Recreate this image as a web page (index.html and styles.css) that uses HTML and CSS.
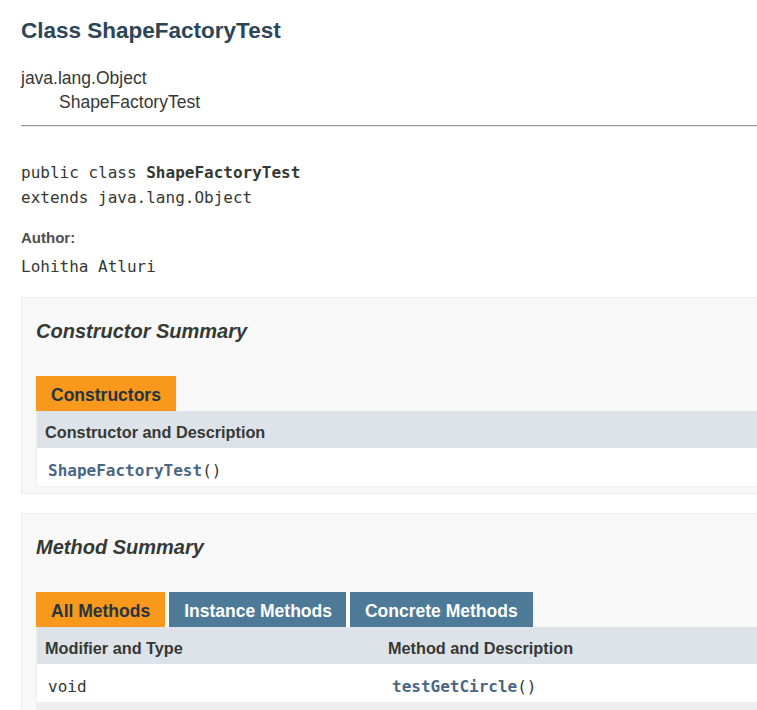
FILE: index.html
```html
<!DOCTYPE html>
<html lang="en">
<head>
<meta charset="utf-8">
<title>ShapeFactoryTest</title>
<link rel="stylesheet" href="styles.css">
</head>
<body>
<div class="page">
  <h2 class="title">Class ShapeFactoryTest</h2>
  <div class="inheritance">
    <div class="inh-line">java.lang.Object</div>
    <div class="inh-line inh-sub">ShapeFactoryTest</div>
  </div>
  <div class="rule"></div>
  <pre class="decl">public class <b>ShapeFactoryTest</b>
extends java.lang.Object</pre>
  <div class="tag-label">Author:</div>
  <div class="tag-value">Lohitha Atluri</div>

  <section class="block">
    <h3 class="block-title">Constructor Summary</h3>
    <div class="tabs">
      <span class="tab active">Constructors</span>
    </div>
    <div class="table one-col">
      <div class="th">Constructor and Description</div>
      <div class="td code"><a class="member" href="#">ShapeFactoryTest</a>()</div>
    </div>
  </section>

  <section class="block">
    <h3 class="block-title">Method Summary</h3>
    <div class="tabs">
      <span class="tab active">All Methods</span>
      <span class="tab">Instance Methods</span>
      <span class="tab">Concrete Methods</span>
    </div>
    <div class="table two-col">
      <div class="th">Modifier and Type</div>
      <div class="th">Method and Description</div>
      <div class="td code first">void</div>
      <div class="td code last"><a class="member" href="#">testGetCircle</a>()</div>
      <div class="td code first alt"></div>
      <div class="td code last alt"></div>
    </div>
  </section>
</div>
</body>
</html>
```

FILE: styles.css
```css
html, body {
  margin: 0;
  padding: 0;
  overflow: hidden;
  background: #fff;
}

body {
  font-family: "Liberation Sans", Arial, sans-serif;
  color: #353833;
}

.page {
  padding-left: 21px;
  width: 1100px;
}

.title {
  margin: 18px 0 0;
  font-size: 22.5px;
  line-height: 26px;
  font-weight: bold;
  color: #2c4557;
}

.inheritance {
  margin-top: 23px;
  font-size: 17.5px;
  line-height: 23.5px;
}

.inh-sub {
  padding-left: 38px;
}

.rule {
  margin-top: 11px;
  border-top: 1px solid #999;
  border-bottom: 1px solid #e4e4e4;
}

.decl {
  margin: 33px 0 0;
  font-family: "DejaVu Sans Mono", monospace;
  font-size: 16px;
  line-height: 25px;
  color: #353833;
}

.decl b {
  font-weight: bold;
}

.tag-label {
  margin-top: 19px;
  font-size: 15px;
  line-height: 18px;
  font-weight: bold;
  color: #4e4e4e;
}

.tag-value {
  margin-top: 9px;
  font-family: "DejaVu Sans Mono", monospace;
  font-size: 16px;
  line-height: 22px;
}

.block {
  margin-top: 19px;
  border: 1px solid #ededed;
  background: #f8f8f8;
  padding: 0 20px 6px 14px;
}

.block + .block {
  margin-top: 19px;
}

.block-title {
  margin: 21px 0 0;
  font-size: 20px;
  line-height: 24px;
  font-style: italic;
  font-weight: bold;
  color: #353833;
}

.tabs {
  margin-top: 33px;
  display: flex;
}

.tab {
  padding: 3px 15px 0;
  line-height: 32px;
  font-size: 17.5px;
  font-weight: bold;
  background: #4d7a97;
  color: #fff;
  border-right: 4px solid #fff;
}

.tab:first-child + .tab {
  padding-right: 14px;
}

.tab:last-child {
  border-right: 0;
}

.tab.active {
  background: #f8981d;
  color: #253441;
}

.table {
  display: grid;
  border-left: 1px solid #eee;
  border-bottom: 1px solid #eee;
  background: #fff;
}

.one-col {
  grid-template-columns: 1fr;
}

.two-col {
  grid-template-columns: 342px 1fr;
}

.th {
  background: #dee3e9;
  padding: 11px 9px 5px 8px;
  line-height: 21px;
  font-size: 16.25px;
  font-weight: bold;
  color: #353833;
}

.two-col .th:nth-child(2) {
  padding-left: 9px;
}

.td {
  background: #fff;
  padding: 12px 9px 5px 11px;
  line-height: 21px;
  min-height: 21px;
}

.td.last {
  padding-left: 13px;
}

.td.alt {
  background: #eeeeef;
}

.code {
  font-family: "DejaVu Sans Mono", monospace;
  font-size: 16px;
  color: #353833;
}

.member {
  color: #4a6782;
  font-weight: bold;
  text-decoration: none;
}
```
